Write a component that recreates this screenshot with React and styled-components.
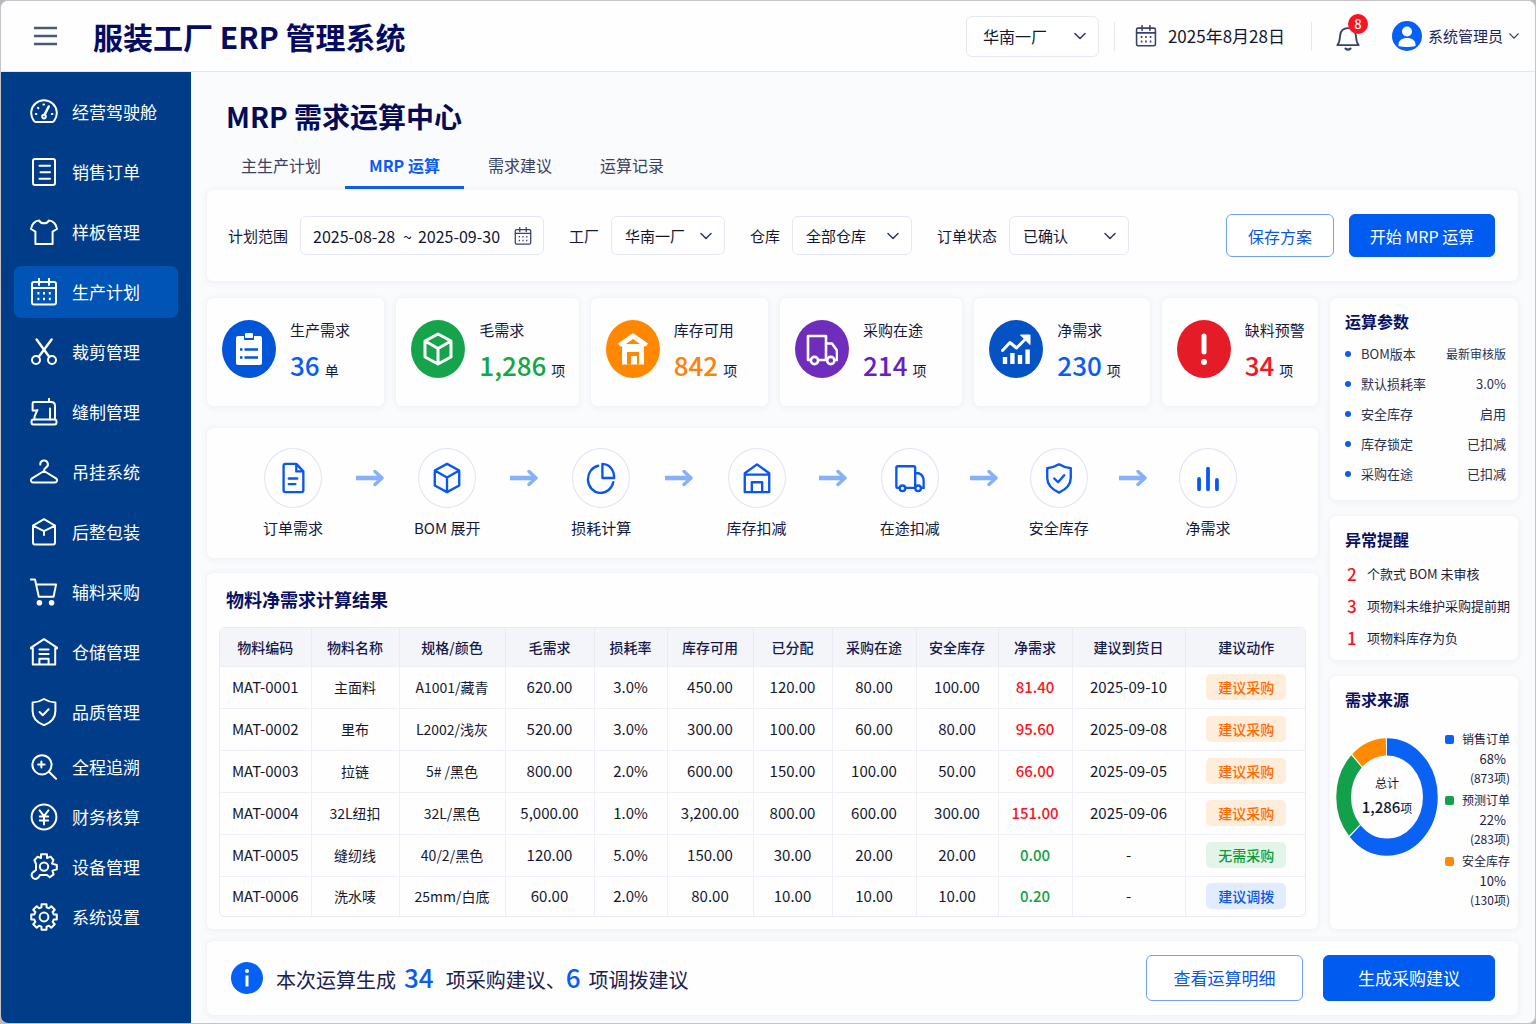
import React from "react";
import styled, { createGlobalStyle, css } from "styled-components";

const GlobalStyle = createGlobalStyle`
  * {
    box-sizing: border-box;
  }

  body {
    margin: 0;
    background: #b9babd;
    color: #14193c;
    font-family: "Noto Sans CJK SC", "Noto Sans", sans-serif;
    font-size: 15px;
    line-height: 24px;
  }

  button,
  input,
  select {
    font: inherit;
    color: inherit;
  }

  h1,
  h2,
  p,
  ul,
  dl,
  dd {
    margin: 0;
    padding: 0;
  }

  ul {
    list-style: none;
  }
`;

/* ---------- icons ---------- */

const gearPath = () => {
  const point = (radius, degrees) => {
    const a = (degrees * Math.PI) / 180;
    return `${(14 + radius * Math.sin(a)).toFixed(2)} ${(14 - radius * Math.cos(a)).toFixed(2)}`;
  };
  const teeth = [0, 45, 90, 135, 180, 225, 270, 315];
  return (
    "M" +
    teeth
      .map((a) => [point(10, a - 15), point(13, a - 11), point(13, a + 11), point(10, a + 15)].join(" L"))
      .join(" L") +
    "Z"
  );
};

const icons = {
  gauge: (
    <>
      <path d="M3.6 22.4A12.8 12.8 0 1 1 24.4 22.4Q23.5 24 22 24H6Q4.5 24 3.6 22.4Z" />
      <path d="M18.8 8.4 14.6 16.6" strokeWidth="2.4" />
      <circle cx="14" cy="18.6" r="1.8" />
      <path d="M5.8 16h.6M8 9.8l.4.4M13.4 6.4h.6M21.8 16h.6" />
    </>
  ),
  order: (
    <>
      <rect x="3" y="1" width="22" height="26" rx="2" />
      <path d="M9.5 7.8h10.5M10.5 14.3h9.5M9.5 20.8h10.5" />
    </>
  ),
  shirt: (
    <path d="M9.3 2.6C10.6 6.2 17.4 6.2 18.7 2.6 23 2.6 26.4 6 27 11L22.6 13.6V26H5.4V13.6L1 11C1.6 6 5 2.6 9.3 2.6Z" />
  ),
  calendar: (
    <>
      <rect x="2" y="4" width="24" height="22.5" rx="2" />
      <path d="M2 10H26M9 .8V7M19 .8V7" />
      <path
        d="M7.4 15.2h2M13 15.2h2M18.8 15.2h2M7.4 21h2M13 21h2M18.8 21h2"
        strokeWidth="2.4"
        strokeLinecap="butt"
      />
    </>
  ),
  scissors: (
    <>
      <circle cx="6" cy="22" r="4" />
      <circle cx="22" cy="22" r="4" />
      <path d="M6.6 1.5 19.2 18.8M21.6 1.5 8.8 18.8" strokeWidth="2.4" />
    </>
  ),
  sewing: (
    <>
      <rect x="1.5" y="21.4" width="25" height="5.2" rx="2" />
      <path d="M19 .8V4M6.4 12.4H2.6V5.4Q2.6 4 4 4H21Q25 4 25 8V21.4M7.4 12 4.6 18.4M20 10.5V21.4M4.5 21.4V19" />
    </>
  ),
  hanger: (
    <>
      <path d="M10.3 6.6A3.8 3.8 0 1 1 15.9 9.6C14.6 10.3 14 11 14 13" />
      <path d="M14 13 2 20.4C.2 21.8 1 24.4 3 24.4H25C27 24.4 27.8 21.8 26 20.4Z" />
    </>
  ),
  pack: (
    <path d="M14 1.2 25 7.6V24.5Q25 26.4 23.2 26.4H4.8Q3 26.4 3 24.5V7.6ZM3 7.6 14 13.2 25 7.6M14 13.2V17" />
  ),
  cart: (
    <>
      <path d="M.8 1.4H5L8.8 18.8H23.6L26 6.6H6.2" />
      <circle cx="9.4" cy="24.8" r="1.8" fill="currentColor" />
      <circle cx="21.6" cy="24.8" r="1.8" fill="currentColor" />
    </>
  ),
  depot: (
    <path d="M1 10.6V9.6L14 1.2 27 9.6V10.6M2.8 9.5V26.4H25.2V9.5M9.4 11.4H18.6M9.4 16H18.6M9.4 26.4V20.8H18.6V26.4" />
  ),
  shield: (
    <>
      <path d="M14 1C17.5 3.2 21.4 4.4 25.4 4.6V13C25.4 20 20.5 24.8 14 27.2 7.5 24.8 2.6 20 2.6 13V4.6C6.6 4.4 10.5 3.2 14 1Z" />
      <path d="M9.6 14 12.8 17.2 18.6 11.2" />
    </>
  ),
  trace: (
    <>
      <circle cx="12" cy="11.8" r="9.6" />
      <path d="M19 18.8 26 25.8M11.4 8.4V14.6M8.2 11.5H14.6" />
    </>
  ),
  yen: (
    <>
      <circle cx="14" cy="14" r="12.4" />
      <path d="M9.6 7.4 14 13.2 18.4 7.4M14 13.2V21.4M9.8 13.6H18.2M9.8 17.4H18.2" />
    </>
  ),
  device: (
    <>
      <path d="M11 5V1.2H17V5L20.6 3.6 23.4 7 22 10.6 26.8 12V16.4L22.4 17.6 23.6 21.4 19.8 24.2 17 22H10L8.4 24.6Q5.6 27 3 25 .4 22.2 2.6 19.6L6 17V11L4.4 7.2 7.6 3.8Z" />
      <circle cx="14" cy="13.6" r="4.2" />
    </>
  ),
  gear: (
    <>
      <path d={gearPath()} />
      <circle cx="14" cy="14" r="4.4" />
    </>
  ),
  bell: (
    <>
      <path d="M2.5 21.6H25.5C22.6 18.4 23 15 22.4 10.8 21.8 6 18.4 3.4 14 3.4S6.2 6 5.6 10.8C5 15 5.4 18.4 2.5 21.6Z" />
      <path d="M11.4 25.4Q14 27.6 16.6 25.4" strokeWidth="2.4" />
    </>
  ),
};

const LineIcon = ({ name, size = 28 }) => (
  <svg
    width={size}
    height={size}
    viewBox="0 0 28 28"
    fill="none"
    stroke="currentColor"
    strokeWidth="2"
    strokeLinecap="round"
    strokeLinejoin="round"
    aria-hidden="true"
  >
    {icons[name]}
  </svg>
);

const cube = "M16 2 29 9V25L16 32 3 25V9ZM3 9 16 16.5 29 9M16 16.5V32";

const kpiIcons = {
  clipboard: (
    <>
      <path d="M5 4H11V8H21V4H27Q29 4 29 6V31Q29 33 27 33H5Q3 33 3 31V6Q3 4 5 4Z" fill="#fff" />
      <rect x="12" y="1" width="8" height="5" rx="1" fill="#fff" />
      <path d="M7 17.5H9.5M11.5 17.5H25M7 25.5H9.5M11.5 25.5H25" stroke="#0055d8" strokeWidth="2.4" />
    </>
  ),
  cube: <path d={cube} fill="none" stroke="#fff" strokeWidth="3" strokeLinejoin="round" />,
  house: (
    <>
      <path d="M16 1 31 11.5 29 14.6 27 14V32.5H5V14L3 14.6 1 11.5Z" fill="#fff" />
      <path d="M9 12 16 7 23 12Z" fill="#ff8800" />
      <path d="M10 32.5V20H22V32.5H20V24H14V32.5Z" fill="#ff8800" />
    </>
  ),
  truck: (
    <g fill="none" stroke="#fff" strokeWidth="2.6" strokeLinejoin="round">
      <path d="M4 28H2V4H20V28H12M20 11.5H26L31 18.5V28H29M20 28H21" />
      <circle cx="8.5" cy="28.5" r="3.6" />
      <circle cx="24.8" cy="28.5" r="3.6" />
    </g>
  ),
  trend: (
    <g fill="none" stroke="#fff">
      <path d="M2.5 18.5 10 10.5 16.5 16 27 5.5" strokeWidth="3" strokeLinejoin="round" strokeLinecap="round" />
      <path d="M20.5 3H30V12.5Z" fill="#fff" />
      <path d="M5 32V25M12.4 32V21M20 32V23M27.6 32V17.5" strokeWidth="4.4" />
    </g>
  ),
  alert: (
    <g stroke="#fff" strokeLinecap="round" strokeWidth="5">
      <path d="M16 4V20" />
      <path d="M16 30V30.1" strokeWidth="6" />
    </g>
  ),
};

const flowIcons = {
  doc: (
    <>
      <path d="M8 2H19.5L27 10V30Q27 32 25 32H8Q6 32 6 30V4Q6 2 8 2ZM19.5 2V10H27" />
      <path d="M11.5 17.5H20.5M11.5 23.5H18.5" />
    </>
  ),
  cube: <path d={cube} />,
  pie: (
    <>
      <path d="M13 4A13.6 14.6 0 1 0 29 21.5" />
      <path d="M17.5 2V17H30C30 8 25 2.4 17.5 2Z" />
    </>
  ),
  house: <path d="M3 12 16 2.5 29 12V32H3ZM3 13.4H29M10.5 32V21.5H21.5V32" />,
  truck: (
    <>
      <path d="M4 27.5H2.5Q1.5 27.5 1.5 26V6Q1.5 4.5 3 4.5H20Q21.5 4.5 21.5 6V27.5H11.5M21.5 12H25.5Q30.5 14 30.5 20V27.5H28.5" />
      <circle cx="8" cy="28" r="3" />
      <circle cx="24.6" cy="28" r="3" />
    </>
  ),
  shield: (
    <>
      <path d="M16 2.5C20 5 24 6.2 28.5 6.6V17C28.5 24.5 23.5 29 16 32.5 8.5 29 3.5 24.5 3.5 17V6.6C8 6.2 12 5 16 2.5Z" />
      <path d="M11 17.5 15 21.5 21.5 14" />
    </>
  ),
  bars: <path d="M6.5 18V29M16 7V29M25.5 19V29" strokeWidth="4" />,
};

const Chevron = ({ size = 12 }) => (
  <svg width={size} height={size} viewBox="0 0 12 12" fill="none" stroke="#2c3568" strokeWidth="1.5" aria-hidden="true">
    <path d="M1 3.5 6 8.5 11 3.5" strokeLinecap="round" strokeLinejoin="round" />
  </svg>
);

const ArrowIcon = () => (
  <svg width="28" height="18" viewBox="0 0 28 18" fill="none" stroke="#86b1f9" strokeLinejoin="round" aria-hidden="true">
    <path d="M0 9H24" strokeWidth="4.6" />
    <path d="M19 2.5 26 9 19 15.5" strokeWidth="3.4" strokeLinecap="round" />
  </svg>
);

/* ---------- shell ---------- */

const Frame = styled.div`
  min-height: 100vh;
  display: flex;
  flex-direction: column;
  border: 1px solid #c3c5ca;
  border-radius: 8px;
  overflow: hidden;
  background: #fafbfd;
`;

const Header = styled.header`
  height: 71px;
  display: flex;
  align-items: center;
  padding: 0 16px 0 32px;
  border-bottom: 1px solid #e2e7f3;
  background: #fefefe;
`;

const MenuButton = styled.button`
  width: 24px;
  height: 24px;
  padding: 0;
  border: 0;
  background: none;
  display: flex;
  align-items: center;
  cursor: pointer;
`;

const Brand = styled.div`
  margin-left: 36px;
  flex: 1;
  font-size: 30px;
  line-height: 40px;
  font-weight: 700;
  color: #060b62;
`;

const Divider = styled.span`
  width: 1px;
  height: 29px;
  background: #e3e7f1;
`;

const Today = styled.div`
  display: flex;
  align-items: center;
  gap: 11px;
  padding: 0 26px 0 20px;
  font-size: 17px;
  color: #11152f;

  svg {
    color: #36416f;
  }
`;

const BellButton = styled.button`
  position: relative;
  display: flex;
  align-items: flex-end;
  width: 26px;
  height: 30px;
  margin-left: 23px;
  padding: 0;
  border: 0;
  background: none;
  color: #36416f;
  cursor: pointer;
`;

const Badge = styled.span`
  position: absolute;
  top: -7px;
  right: -7px;
  width: 20px;
  height: 20px;
  border-radius: 50%;
  background: #fb1420;
  color: #fff;
  font-size: 13px;
  line-height: 20px;
  font-weight: 500;
  text-align: center;
`;

const UserButton = styled.button`
  display: flex;
  align-items: center;
  gap: 6px;
  margin-left: 31px;
  padding: 0;
  border: 0;
  background: none;
  color: #1c2458;
  cursor: pointer;
`;

const Body = styled.div`
  flex: 1;
  display: flex;
`;

const Sidebar = styled.nav`
  flex: 0 0 190px;
  padding: 10px 13px;
  background: #003c87;
`;

const NavItem = styled.li`
  height: ${({ $compact }) => ($compact ? "50px" : "60px")};
  display: flex;
  align-items: center;
`;

const NavLink = styled.a`
  width: 100%;
  height: ${({ $compact }) => ($compact ? "46px" : "52px")};
  display: flex;
  align-items: center;
  gap: 14px;
  padding: 0 16px;
  border-radius: 7px;
  background: ${({ $active }) => ($active ? "#0054b6" : "transparent")};
  color: #fff;
  font-size: 17px;
  text-decoration: none;

  &:hover {
    background: #0054b6;
  }
`;

const Main = styled.main`
  flex: 1;
  min-width: 0;
  padding: 24px 16px 7px 15px;
`;

const PageTitle = styled.h1`
  padding-left: 20px;
  font-size: 28px;
  line-height: 40px;
  font-weight: 700;
  color: #060b55;
`;

const Tabs = styled.div`
  display: flex;
  margin-top: 7px;
  padding-left: 11px;
`;

const Tab = styled.button`
  height: 46px;
  padding: 0 24px;
  border: 0;
  border-bottom: 3px solid ${({ $active }) => ($active ? "#0a5cf5" : "transparent")};
  background: none;
  font-size: 16px;
  font-weight: ${({ $active }) => ($active ? 700 : 400)};
  color: ${({ $active }) => ($active ? "#0a5cf5" : "#3a4060")};
  cursor: pointer;
`;

const Card = styled.section`
  background: #fefefe;
  border: 1px solid #f2f4f9;
  border-radius: 7px;
  box-shadow: 0 1px 6px rgba(40, 60, 120, 0.06);
`;

/* ---------- filters ---------- */

const FilterBar = styled(Card)`
  min-height: 93px;
  display: flex;
  align-items: center;
  gap: 25px;
  padding: 0 23px 0 21px;
`;

const Field = styled.label`
  display: flex;
  align-items: center;
  gap: 12px;
  white-space: nowrap;
`;

const Control = styled.div`
  display: flex;
  align-items: center;
  height: ${({ $tall }) => ($tall ? "41px" : "39px")};
  border: 1px solid #e3e8f3;
  border-radius: 6px;
  background: #fff;
  color: #11152f;
`;

const SelectBox = styled(Control)`
  position: relative;
  width: ${({ $width }) => $width};
  font-size: ${({ $tall }) => ($tall ? "16px" : "15px")};

  svg {
    position: absolute;
    right: 12px;
    pointer-events: none;
  }

  select {
    width: 100%;
    height: 100%;
    padding: 0 28px 0 ${({ $tall }) => ($tall ? "16px" : "13px")};
    border: 0;
    background: none;
    appearance: none;
    cursor: pointer;
  }
`;

const DateRange = styled(Control)`
  padding: 0 11px 0 12px;
  gap: 6px;
  font-size: 16px;

  input {
    width: 84px;
    padding: 0;
    border: 0;
    background: none;
  }

  svg {
    margin-left: 6px;
    color: #36416f;
  }
`;

const Actions = styled.div`
  display: flex;
  gap: ${({ $gap }) => $gap};
  margin-left: auto;
`;

const Button = styled.button`
  height: 43px;
  min-width: ${({ $width }) => $width};
  padding: 0 16px;
  border-radius: 6px;
  font-size: 16px;
  white-space: nowrap;
  cursor: pointer;

  ${({ $primary }) =>
    $primary
      ? css`
          border: 1px solid #005bf0;
          background: #005bf0;
          color: #fff;
        `
      : css`
          border: 1px solid #6f9ff8;
          background: #fff;
          color: #0a56ea;
        `}

  ${({ $large }) =>
    $large &&
    css`
      height: 46px;
      font-size: 17px;
    `}
`;

/* ---------- left column ---------- */

const Columns = styled.div`
  display: grid;
  grid-template-columns: minmax(0, 1fr) 190px;
  gap: 10px;
  margin-top: 15px;
`;

const LeftColumn = styled.div`
  display: flex;
  flex-direction: column;
  gap: 13px;
`;

const KpiRow = styled.div`
  display: grid;
  grid-template-columns: 179fr 184fr 179fr 184fr 177fr 158fr;
  gap: 10px;
  margin-bottom: 7px;
`;

const KpiCard = styled(Card)`
  height: 110px;
  display: flex;
  gap: 14px;
  padding: 22px 0 0 15px;
`;

const KpiIcon = styled.div`
  flex: 0 0 54px;
  height: 58px;
  border-radius: 50%;
  background: ${({ $color }) => $color};
  display: flex;
  align-items: center;
  justify-content: center;
`;

const KpiText = styled.div`
  white-space: nowrap;
  line-height: 20px;
`;

const KpiValue = styled.div`
  margin-top: 8px;
  font-size: 14px;
  line-height: 34px;
  color: #14193c;

  strong {
    margin-right: 5px;
    font-size: 26px;
    font-weight: 500;
    color: ${({ $color }) => $color};
  }
`;

const FlowCard = styled(Card)`
  display: grid;
  grid-template-columns: 80px 74fr 80px 74fr 80px 75fr 80px 73fr 80px 69fr 80px 69fr 80px;
  padding: 20px 70px 18px 46px;
`;

const FlowStep = styled.div`
  display: flex;
  flex-direction: column;
  align-items: center;
  gap: 8px;
  color: #14193c;
  white-space: nowrap;
`;

const FlowIcon = styled.div`
  width: 58px;
  height: 60px;
  border: 1px solid #dde4f3;
  border-radius: 50%;
  color: #0a56f0;
  display: flex;
  align-items: center;
  justify-content: center;
`;

const FlowArrow = styled.div`
  height: 60px;
  display: flex;
  align-items: center;
  justify-content: center;
`;

const TableCard = styled(Card)`
  flex: 1;
  padding: 14px 12px 12px;
`;

const CardTitle = styled.h2`
  font-size: ${({ $size }) => $size || "16px"};
  line-height: 24px;
  font-weight: 700;
  color: #0a1060;
`;

const TableTitle = styled(CardTitle)`
  padding-left: 7px;
  margin-bottom: 16px;
`;

const TableFrame = styled.div`
  border: 1px solid #e8ebf3;
  border-radius: 5px;
  overflow: hidden;
`;

const Table = styled.table`
  width: 100%;
  table-layout: fixed;
  border-collapse: collapse;
  text-align: center;
  white-space: nowrap;
`;

const Col = styled.col`
  width: ${({ $width }) => $width}px;
`;

const Th = styled.th`
  height: 38px;
  padding: 0;
  background: #f4f5f8;
  border-right: 1px solid #e8ebf3;
  font-size: 14px;
  font-weight: 500;
  color: #141a4c;

  &:last-child {
    border-right: 0;
  }
`;

const Td = styled.td`
  height: ${({ $last }) => ($last ? "40px" : "42px")};
  padding: 0;
  border-top: 1px solid #edf0f6;
  border-right: 1px solid #edf0f6;
  font-size: ${({ $text }) => ($text ? "14px" : "15px")};
  font-weight: ${({ $color }) => ($color ? 500 : 400)};
  color: ${({ $color }) => $color || "#14182f"};

  &:last-child {
    border-right: 0;
  }
`;

const tones = {
  orange: { ink: "#ff6a00", paper: "#ffeddb" },
  green: { ink: "#109a3c", paper: "#e3f5e8" },
  blue: { ink: "#0a56ea", paper: "#e1ecfe" },
};

const Tag = styled.span`
  display: block;
  width: 80px;
  margin: 0 auto;
  line-height: 26px;
  border-radius: 5px;
  font-size: 14px;
  font-weight: 500;
  color: ${({ $tone }) => tones[$tone].ink};
  background: ${({ $tone }) => tones[$tone].paper};
`;

/* ---------- right column ---------- */

const RightColumn = styled.aside`
  display: flex;
  flex-direction: column;
  gap: 14px;
`;

const SideCard = styled(Card)`
  padding: 11px 12px ${({ $bottom }) => $bottom} 15px;
  white-space: nowrap;
`;

const ParamList = styled.dl`
  margin-top: 6px;
  font-size: 13px;
  color: #2a3050;
`;

const Param = styled.div`
  height: 30px;
  display: flex;
  align-items: center;
  justify-content: space-between;

  dt {
    display: flex;
    align-items: center;
    gap: 10px;
  }

  dt::before {
    content: "";
    width: 6px;
    height: 6px;
    border-radius: 50%;
    background: #0a5cf5;
  }

  dd {
    font-size: ${({ $small }) => ($small ? "12px" : "13px")};
  }
`;

const AlertList = styled.ul`
  margin: 7px -8px 0 0;
  font-size: 13px;
  color: #1c2140;
`;

const AlertItem = styled.li`
  height: 32px;
  display: flex;
  align-items: center;

  strong {
    flex: 0 0 22px;
    padding-left: 2px;
    font-size: 17px;
    font-weight: 500;
    color: #fb1420;
  }
`;

const SourceCard = styled(SideCard)`
  flex: 1;
`;

const SourceBody = styled.div`
  display: flex;
  justify-content: space-between;
  margin: 19px -4px 0 -9px;
`;

const DonutBox = styled.div`
  display: grid;
  place-items: center;
  align-self: flex-start;
  margin-top: 8px;

  > * {
    grid-area: 1 / 1;
  }
`;

const DonutLabel = styled.div`
  margin-bottom: 4px;
  font-size: 12px;
  text-align: center;
  color: #14182f;

  strong {
    font-size: 15px;
    font-weight: 500;
  }
`;

const Legend = styled.ul`
  color: #1c2140;
`;

const LegendItem = styled.li`
  display: grid;
  grid-template-columns: 17px auto;
  align-items: center;
  justify-items: end;
  margin-bottom: 4px;
  font-size: 12px;
  line-height: 18px;

  &::before {
    content: "";
    justify-self: start;
    width: 9px;
    height: 9px;
    border-radius: 2px;
    background: ${({ $color }) => $color};
  }

  span {
    grid-column: 2;
  }
`;

const Percent = styled.span`
  padding-right: 4px;
  font-size: 13px;
  line-height: 21px;
`;

/* ---------- footer ---------- */

const SummaryBar = styled(Card)`
  height: 76px;
  display: flex;
  align-items: center;
  margin-top: 10px;
  padding: 0 23px 0 24px;
`;

const SummaryText = styled.p`
  margin-left: 13px;
  font-size: 20px;
  line-height: 34px;
  color: #1a2150;

  strong {
    margin: 0 12px 0 8px;
    font-size: 26px;
    font-weight: 500;
    color: #0a5cf5;
  }

  strong + strong {
    margin: 0 8px 0 0;
  }
`;

/* ---------- data ---------- */

const navItems = [
  { label: "经营驾驶舱", icon: "gauge" },
  { label: "销售订单", icon: "order" },
  { label: "样板管理", icon: "shirt" },
  { label: "生产计划", icon: "calendar", active: true },
  { label: "裁剪管理", icon: "scissors" },
  { label: "缝制管理", icon: "sewing" },
  { label: "吊挂系统", icon: "hanger" },
  { label: "后整包装", icon: "pack" },
  { label: "辅料采购", icon: "cart" },
  { label: "仓储管理", icon: "depot" },
  { label: "品质管理", icon: "shield" },
  { label: "全程追溯", icon: "trace", compact: true },
  { label: "财务核算", icon: "yen", compact: true },
  { label: "设备管理", icon: "device", compact: true },
  { label: "系统设置", icon: "gear", compact: true },
];

const tabs = ["主生产计划", "MRP 运算", "需求建议", "运算记录"];

const kpis = [
  { label: "生产需求", value: "36", unit: "单", icon: "clipboard", fill: "#0055d8", color: "#0a5cf5" },
  { label: "毛需求", value: "1,286", unit: "项", icon: "cube", fill: "#15a44c", color: "#12a846" },
  { label: "库存可用", value: "842", unit: "项", icon: "house", fill: "#ff8800", color: "#ff8208" },
  { label: "采购在途", value: "214", unit: "项", icon: "truck", fill: "#6f2dbd", color: "#6a1fc0" },
  { label: "净需求", value: "230", unit: "项", icon: "trend", fill: "#0452c4", color: "#0a5cf5" },
  { label: "缺料预警", value: "34", unit: "项", icon: "alert", fill: "#e51c27", color: "#fb1420" },
];

const flowSteps = [
  { label: "订单需求", icon: "doc" },
  { label: "BOM 展开", icon: "cube" },
  { label: "损耗计算", icon: "pie" },
  { label: "库存扣减", icon: "house" },
  { label: "在途扣减", icon: "truck" },
  { label: "安全库存", icon: "shield" },
  { label: "净需求", icon: "bars" },
];

const columns = [
  ["物料编码", 91],
  ["物料名称", 88],
  ["规格/颜色", 106],
  ["毛需求", 89],
  ["损耗率", 73],
  ["库存可用", 86],
  ["已分配", 79],
  ["采购在途", 84],
  ["安全库存", 82],
  ["净需求", 74],
  ["建议到货日", 113],
  ["建议动作", 122],
];

const NET = 9;

const rows = [
  { cells: ["MAT-0001", "主面料", "A1001/藏青", "620.00", "3.0%", "450.00", "120.00", "80.00", "100.00", "81.40", "2025-09-10"], action: "建议采购", tone: "orange" },
  { cells: ["MAT-0002", "里布", "L2002/浅灰", "520.00", "3.0%", "300.00", "100.00", "60.00", "80.00", "95.60", "2025-09-08"], action: "建议采购", tone: "orange" },
  { cells: ["MAT-0003", "拉链", "5# /黑色", "800.00", "2.0%", "600.00", "150.00", "100.00", "50.00", "66.00", "2025-09-05"], action: "建议采购", tone: "orange" },
  { cells: ["MAT-0004", "32L纽扣", "32L/黑色", "5,000.00", "1.0%", "3,200.00", "800.00", "600.00", "300.00", "151.00", "2025-09-06"], action: "建议采购", tone: "orange" },
  { cells: ["MAT-0005", "缝纫线", "40/2/黑色", "120.00", "5.0%", "150.00", "30.00", "20.00", "20.00", "0.00", "-"], action: "无需采购", tone: "green" },
  { cells: ["MAT-0006", "洗水唛", "25mm/白底", "60.00", "2.0%", "80.00", "10.00", "10.00", "10.00", "0.20", "-"], action: "建议调拨", tone: "blue" },
];

const params = [
  ["BOM版本", "最新审核版"],
  ["默认损耗率", "3.0%"],
  ["安全库存", "启用"],
  ["库存锁定", "已扣减"],
  ["采购在途", "已扣减"],
];

const alerts = [
  ["2", "个款式 BOM 未审核"],
  ["3", "项物料未维护采购提前期"],
  ["1", "项物料库存为负"],
];

// arc is the drawn share of the ring, out of 100
const sources = [
  { label: "销售订单", percent: "68%", count: "(873项)", color: "#0a62f5", arc: 63.5 },
  { label: "预测订单", percent: "22%", count: "(283项)", color: "#12a04a", arc: 24.5 },
  { label: "安全库存", percent: "10%", count: "(130项)", color: "#ff8a00", arc: 12 },
];

/* ---------- parts ---------- */

const Select = ({ value, width, tall, ...rest }) => (
  <SelectBox $width={width} $tall={tall}>
    <select defaultValue={value} {...rest}>
      <option>{value}</option>
    </select>
    <Chevron />
  </SelectBox>
);

const HeaderTools = styled.div`
  display: flex;
  align-items: center;
  gap: 15px;
`;

const Donut = () => {
  let start = 0;
  return (
    <svg width="102" height="118" viewBox="0 0 100 100" preserveAspectRatio="none" aria-hidden="true">
      <g fill="none" strokeWidth="14.5" transform="rotate(-90 50 50)">
        {sources.map(({ label, color, arc }) => {
          const offset = -start;
          start += arc;
          return (
            <circle
              key={label}
              cx="50"
              cy="50"
              r="42.5"
              pathLength="100"
              stroke={color}
              strokeDasharray={`${arc - 0.4} ${100 - arc + 0.4}`}
              strokeDashoffset={offset}
            />
          );
        })}
      </g>
    </svg>
  );
};

const App = () => (
  <Frame>
    <GlobalStyle />
    <Header>
      <MenuButton aria-label="菜单">
        <svg width="24" height="20" viewBox="0 0 24 20" stroke="#4b5878" strokeWidth="2.4" aria-hidden="true">
          <path d="M1 2H24M1 10H24M1 18H24" />
        </svg>
      </MenuButton>
      <Brand>服装工厂 ERP 管理系统</Brand>
      <HeaderTools>
        <Select value="华南一厂" width="133px" tall aria-label="当前工厂" />
        <Divider />
      </HeaderTools>
      <Today>
        <LineIcon name="calendar" size={22} />
        2025年8月28日
      </Today>
      <Divider />
      <BellButton aria-label="通知">
        <LineIcon name="bell" size={26} />
        <Badge>8</Badge>
      </BellButton>
      <UserButton>
        <svg width="30" height="30" viewBox="0 0 30 30" aria-hidden="true">
          <circle cx="15" cy="15" r="15" fill="#0561f5" />
          <circle cx="15" cy="10.5" r="5" fill="#fff" />
          <path d="M6.5 25V23.5C6.5 19.5 10 17 15 17S23.5 19.5 23.5 23.5V25Q20 26 15 26T6.5 25Z" fill="#fff" />
        </svg>
        系统管理员
        <Chevron size={10} />
      </UserButton>
    </Header>

    <Body>
      <Sidebar>
        <ul>
          {navItems.map(({ label, icon, active, compact }) => (
            <NavItem key={label} $compact={compact}>
              <NavLink href="#" $active={active} $compact={compact}>
                <LineIcon name={icon} />
                {label}
              </NavLink>
            </NavItem>
          ))}
        </ul>
      </Sidebar>

      <Main>
        <PageTitle>MRP 需求运算中心</PageTitle>
        <Tabs role="tablist">
          {tabs.map((tab, i) => (
            <Tab key={tab} role="tab" aria-selected={i === 1} $active={i === 1}>
              {tab}
            </Tab>
          ))}
        </Tabs>

        <FilterBar>
          <Field as="div">
            <span id="range-label">计划范围</span>
            <DateRange role="group" aria-labelledby="range-label">
              <input defaultValue="2025-08-28" aria-label="开始日期" />
              <span>~</span>
              <input defaultValue="2025-09-30" aria-label="结束日期" />
              <LineIcon name="calendar" size={18} />
            </DateRange>
          </Field>
          <Field>
            工厂
            <Select value="华南一厂" width="114px" />
          </Field>
          <Field>
            仓库
            <Select value="全部仓库" width="120px" />
          </Field>
          <Field>
            订单状态
            <Select value="已确认" width="120px" />
          </Field>
          <Actions $gap="15px">
            <Button $width="108px">保存方案</Button>
            <Button $primary $width="146px">
              开始 MRP 运算
            </Button>
          </Actions>
        </FilterBar>

        <Columns>
          <LeftColumn>
            <KpiRow>
              {kpis.map(({ label, value, unit, icon, fill, color }) => (
                <KpiCard key={label}>
                  <KpiIcon $color={fill}>
                    <svg width="32" height="34" viewBox="0 0 32 34" aria-hidden="true">
                      {kpiIcons[icon]}
                    </svg>
                  </KpiIcon>
                  <KpiText>
                    {label}
                    <KpiValue $color={color}>
                      <strong>{value}</strong>
                      {unit}
                    </KpiValue>
                  </KpiText>
                </KpiCard>
              ))}
            </KpiRow>

            <FlowCard>
              {flowSteps.map(({ label, icon }, i) => (
                <React.Fragment key={label}>
                  {i > 0 && (
                    <FlowArrow>
                      <ArrowIcon />
                    </FlowArrow>
                  )}
                  <FlowStep>
                    <FlowIcon>
                      <svg
                        width="32"
                        height="32"
                        viewBox="0 0 32 34"
                        fill="none"
                        stroke="currentColor"
                        strokeWidth="2.5"
                        strokeLinecap="round"
                        strokeLinejoin="round"
                        aria-hidden="true"
                      >
                        {flowIcons[icon]}
                      </svg>
                    </FlowIcon>
                    {label}
                  </FlowStep>
                </React.Fragment>
              ))}
            </FlowCard>

            <TableCard>
              <TableTitle $size="18px">物料净需求计算结果</TableTitle>
              <TableFrame>
                <Table>
                  <colgroup>
                    {columns.map(([name, width]) => (
                      <Col key={name} $width={width} />
                    ))}
                  </colgroup>
                  <thead>
                    <tr>
                      {columns.map(([name]) => (
                        <Th key={name} scope="col">
                          {name}
                        </Th>
                      ))}
                    </tr>
                  </thead>
                  <tbody>
                    {rows.map(({ cells, action, tone }, r) => (
                      <tr key={cells[0]}>
                        {cells.map((cell, i) => (
                          <Td
                            key={columns[i][0]}
                            $last={r === rows.length - 1}
                            $text={i === 1 || i === 2}
                            $color={i === NET && (tone === "orange" ? "#fb1420" : "#12a040")}
                          >
                            {cell}
                          </Td>
                        ))}
                        <Td $last={r === rows.length - 1}>
                          <Tag $tone={tone}>{action}</Tag>
                        </Td>
                      </tr>
                    ))}
                  </tbody>
                </Table>
              </TableFrame>
            </TableCard>
          </LeftColumn>

          <RightColumn>
            <SideCard $bottom="11px">
              <CardTitle>运算参数</CardTitle>
              <ParamList>
                {params.map(([name, value]) => (
                  <Param key={name} $small={value.length > 4}>
                    <dt>{name}</dt>
                    <dd>{value}</dd>
                  </Param>
                ))}
              </ParamList>
            </SideCard>

            <SideCard $bottom="6px">
              <CardTitle>异常提醒</CardTitle>
              <AlertList>
                {alerts.map(([count, text]) => (
                  <AlertItem key={text}>
                    <strong>{count}</strong>
                    {text}
                  </AlertItem>
                ))}
              </AlertList>
            </SideCard>

            <SourceCard $bottom="10px">
              <CardTitle>需求来源</CardTitle>
              <SourceBody>
                <DonutBox>
                  <Donut />
                  <DonutLabel>
                    总计
                    <br />
                    <strong>1,286</strong>项
                  </DonutLabel>
                </DonutBox>
                <Legend>
                  {sources.map(({ label, percent, count, color }) => (
                    <LegendItem key={label} $color={color}>
                      {label}
                      <Percent>{percent}</Percent>
                      <span>{count}</span>
                    </LegendItem>
                  ))}
                </Legend>
              </SourceBody>
            </SourceCard>
          </RightColumn>
        </Columns>

        <SummaryBar>
          <svg width="32" height="32" viewBox="0 0 32 32" aria-hidden="true">
            <circle cx="16" cy="16" r="16" fill="#0561f5" />
            <circle cx="16" cy="9" r="2" fill="#fff" />
            <path d="M16 13.5V24.5" stroke="#fff" strokeWidth="3" />
          </svg>
          <SummaryText>
            本次运算生成<strong>34</strong>项采购建议、<strong>6</strong>项调拨建议
          </SummaryText>
          <Actions $gap="20px">
            <Button $large $width="157px">
              查看运算明细
            </Button>
            <Button $large $primary $width="172px">
              生成采购建议
            </Button>
          </Actions>
        </SummaryBar>
      </Main>
    </Body>
  </Frame>
);

export default App;
